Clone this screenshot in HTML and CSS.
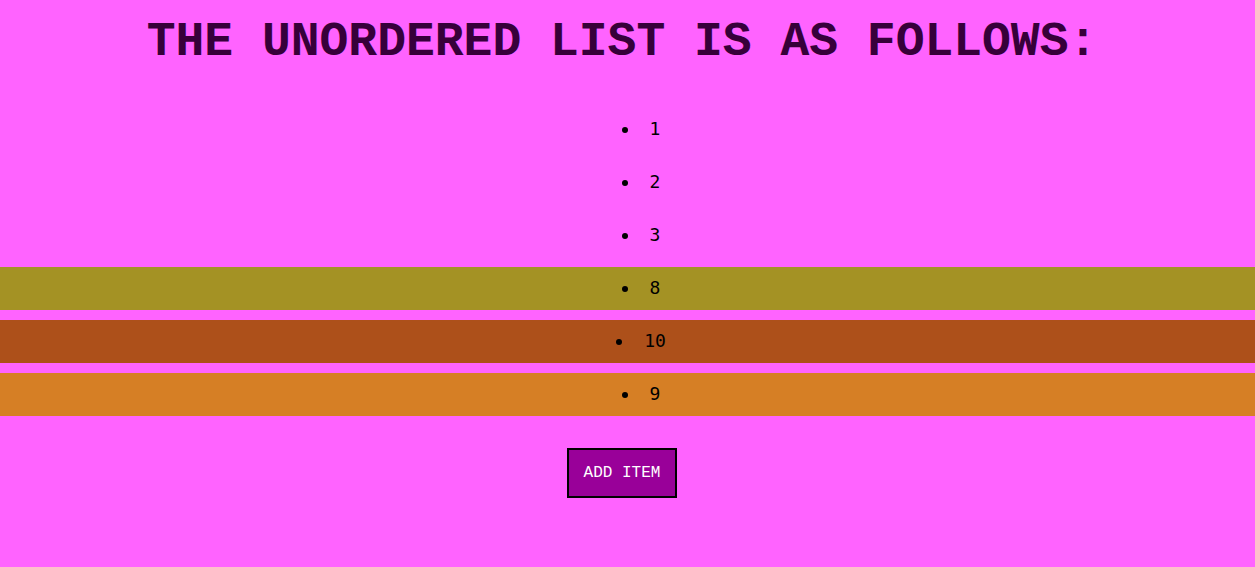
FILE: index.html
```html
<!DOCTYPE html>
<html>
<head>
<meta charset="utf-8">
<title>List</title>
<link rel="stylesheet" href="styles.css">
</head>
<body>
<h1 class="title">THE UNORDERED LIST IS AS FOLLOWS:</h1>
<ul class="items">
  <li class="item"><span class="val">1</span></li>
  <li class="item"><span class="val">2</span></li>
  <li class="item"><span class="val">3</span></li>
  <li class="item item-olive"><span class="val">8</span></li>
  <li class="item item-rust"><span class="val">10</span></li>
  <li class="item item-orange"><span class="val">9</span></li>
</ul>
<div class="actions">
  <button class="add-btn" type="button">ADD ITEM</button>
</div>
</body>
</html>
```

FILE: styles.css
```css
html, body {
  margin: 0;
  padding: 0;
  background: #ff63ff;
}

body {
  font-family: "Courier New", Courier, "Nimbus Mono PS", "Nimbus Mono L", FreeMono, "Liberation Mono", monospace;
}

.title {
  margin: 15px 0 39px;
  padding-right: 11px;
  text-align: center;
  font-family: "Courier New", Courier, "Nimbus Mono PS", "Nimbus Mono L", FreeMono, "Liberation Mono", monospace;
  font-weight: bold;
  font-size: 48px;
  line-height: 54px;
  color: #37003a;
}

.items {
  list-style: none;
  margin: 0;
  padding: 0;
}

.item {
  height: 43px;
  line-height: 42px;
  margin-bottom: 10px;
  padding-left: 55px;
  text-align: center;
  font-family: "DejaVu Sans Mono", monospace;
  font-size: 18px;
  color: #000;
}

.item-olive { background: #a49224; }
.item-rust { background: #ad501a; }
.item-orange { background: #d67f25; }

.val {
  position: relative;
}

.val::before {
  content: "";
  position: absolute;
  left: -28px;
  top: 9px;
  width: 6px;
  height: 6px;
  border-radius: 50%;
  background: #000;
}

.actions {
  margin-top: 32px;
  padding-right: 11px;
  text-align: center;
}

.add-btn {
  width: 110px;
  height: 50px;
  padding: 0;
  border: 2px solid #000;
  background: #990099;
  color: #fff;
  font-family: "Courier New", Courier, "Nimbus Mono PS", "Nimbus Mono L", FreeMono, "Liberation Mono", monospace;
  font-size: 16px;
  cursor: pointer;
}
```
